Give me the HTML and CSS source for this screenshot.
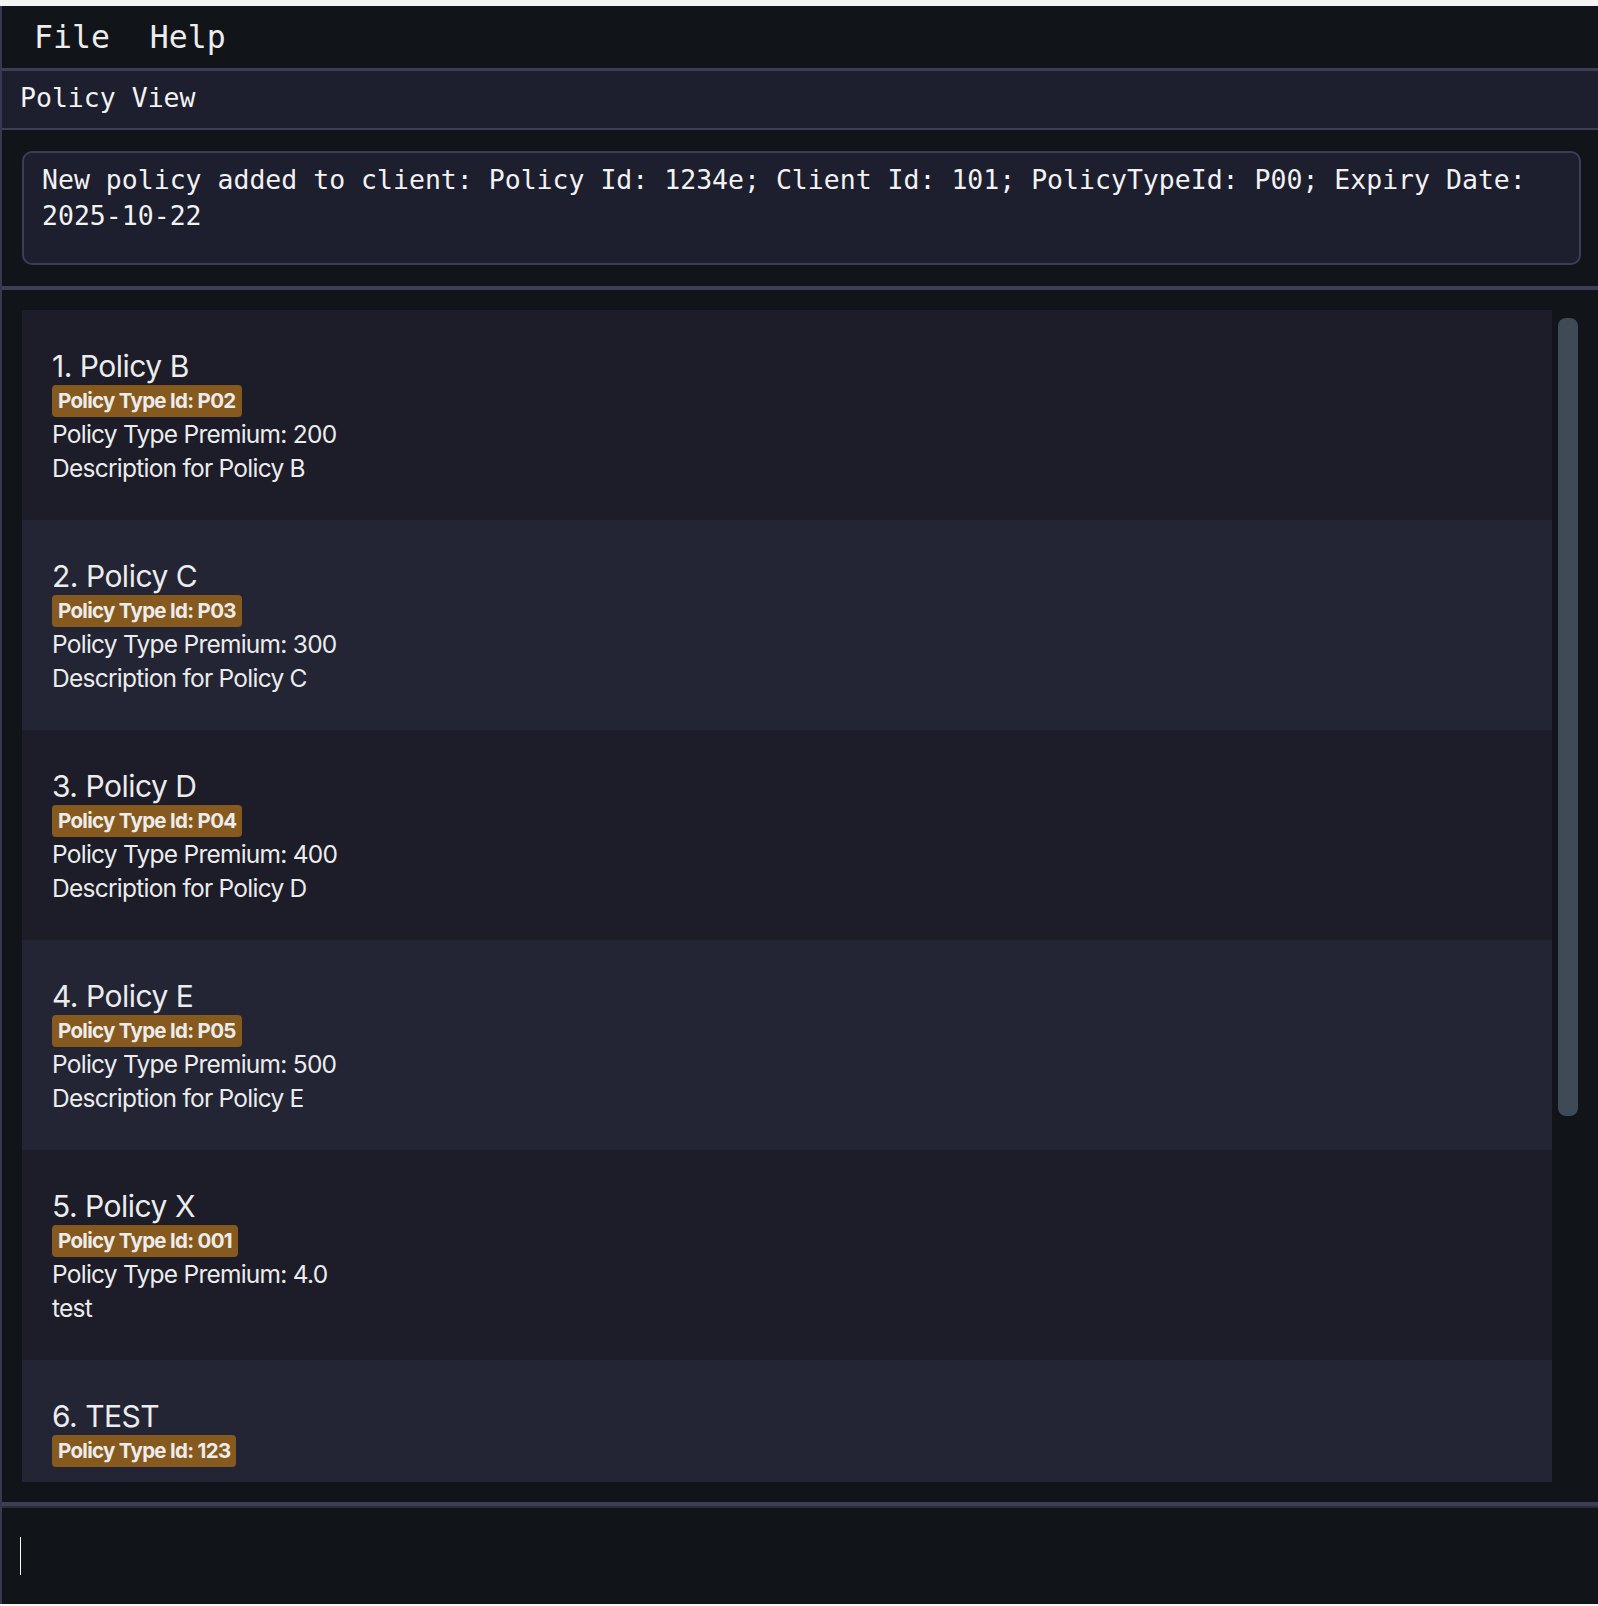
FILE: index.html
```html
<!DOCTYPE html>
<html>
<head>
<meta charset="utf-8">
<link rel="stylesheet" href="styles.css">
</head>
<body>
<div class="window">
  <div class="menubar">
    <span class="menu-item">File</span>
    <span class="menu-item">Help</span>
  </div>
  <div class="line line-menu"></div>
  <div class="view-header">Policy View</div>
  <div class="line line-header"></div>
  <div class="result-area">
    <div class="result-box">New policy added to client: Policy Id: 1234e; Client Id: 101; PolicyTypeId: P00; Expiry Date: 2025-10-22</div>
  </div>
  <div class="line line-result"></div>
  <div class="list-area">
    <div class="list">
      <div class="card card-odd">
        <div class="card-title">1. Policy B</div>
        <span class="badge">Policy Type Id: P02</span>
        <div class="card-line">Policy Type Premium: 200</div>
        <div class="card-line">Description for Policy B</div>
      </div>
      <div class="card card-even">
        <div class="card-title">2. Policy C</div>
        <span class="badge">Policy Type Id: P03</span>
        <div class="card-line">Policy Type Premium: 300</div>
        <div class="card-line">Description for Policy C</div>
      </div>
      <div class="card card-odd">
        <div class="card-title">3. Policy D</div>
        <span class="badge">Policy Type Id: P04</span>
        <div class="card-line">Policy Type Premium: 400</div>
        <div class="card-line">Description for Policy D</div>
      </div>
      <div class="card card-even">
        <div class="card-title">4. Policy E</div>
        <span class="badge">Policy Type Id: P05</span>
        <div class="card-line">Policy Type Premium: 500</div>
        <div class="card-line">Description for Policy E</div>
      </div>
      <div class="card card-odd">
        <div class="card-title">5. Policy X</div>
        <span class="badge">Policy Type Id: 001</span>
        <div class="card-line">Policy Type Premium: 4.0</div>
        <div class="card-line">test</div>
      </div>
      <div class="card card-even">
        <div class="card-title">6. TEST</div>
        <span class="badge">Policy Type Id: 123</span>
      </div>
    </div>
    <div class="scrollbar"><div class="thumb"></div></div>
  </div>
  <div class="line line-command"></div>
  <div class="command">
    <div class="caret"></div>
  </div>
</div>
</body>
</html>
```
FILE: styles.css
```css
html, body {
  margin: 0;
  padding: 0;
}
body {
  background: #f4f4f4;
  width: 1598px;
  height: 1606px;
  overflow: hidden;
}
.window {
  margin-top: 6px;
  height: 1598px;
  border-left: 2px solid #363950;
  background: #111418;
  display: flex;
  flex-direction: column;
  color: #f2f2f2;
}
.menubar {
  height: 62px;
  display: flex;
  align-items: flex-start;
  padding-left: 13px;
  font-family: "DejaVu Sans Mono", "Liberation Mono", monospace;
  font-size: 31.5px;
  line-height: 38px;
  box-sizing: border-box;
  padding-top: 12px;
  color: #ececec;
}
.menu-item {
  padding: 0 19px 0 19px;
}
.menu-item + .menu-item {
  padding-left: 21px;
}
.line {
  background: #3b3e57;
  flex: none;
}
.line-menu { height: 3px; }
.line-header { height: 2px; }
.line-result { height: 4px; }
.line-command {
  height: 6px;
  background: linear-gradient(#3b3e57 0 4px, #2b2d33 4px);
}
.view-header {
  height: 57px;
  box-sizing: border-box;
  background: #1d1f2f;
  padding: 9px 0 0 18px;
  font-family: "DejaVu Sans Mono", "Liberation Mono", monospace;
  font-size: 26.5px;
  line-height: 36px;
}
.result-area {
  height: 156px;
  box-sizing: border-box;
  padding: 21px 17px 0 20px;
}
.result-box {
  height: 114px;
  box-sizing: border-box;
  background: #1d1f2f;
  border: 2px solid #3b3e57;
  border-radius: 10px;
  padding: 9px 18px 0 18px;
  font-family: "DejaVu Sans Mono", "Liberation Mono", monospace;
  font-size: 26.5px;
  line-height: 36px;
  overflow: hidden;
}
.list-area {
  height: 1212px;
  box-sizing: border-box;
  padding: 20px 0 0 20px;
  display: flex;
  align-items: flex-start;
}
.list {
  width: 1530px;
  height: 1172px;
  overflow: hidden;
  flex: none;
}
.card {
  height: 210px;
  box-sizing: border-box;
  padding: 38px 0 0 30px;
  font-family: Inter, "Noto Sans", sans-serif;
  color: #ececec;
}
.card-odd { background: #1d1d29; }
.card-even { background: #232535; }
.card-title {
  font-size: 30px;
  line-height: 36px;
  letter-spacing: -0.5px;
}
.badge {
  display: inline-block;
  margin-top: 1px;
  height: 32px;
  line-height: 32px;
  padding: 0 6px;
  border-radius: 4px;
  background: #865a1e;
  font-size: 20.5px;
  font-weight: 700;
  letter-spacing: -0.7px;
  vertical-align: top;
}
.card-line {
  font-size: 24.5px;
  line-height: 34px;
  letter-spacing: -0.75px;
}
.scrollbar {
  width: 20px;
  margin-left: 6px;
  padding-top: 8px;
  flex: none;
}
.thumb {
  height: 798px;
  background: #3e4a56;
  border-radius: 8px;
}
.command {
  height: 96px;
  box-sizing: border-box;
  padding: 29px 0 0 18px;
  background: #111418;
}
.caret {
  width: 1px;
  height: 38px;
  background: #ffffff;
}
```
